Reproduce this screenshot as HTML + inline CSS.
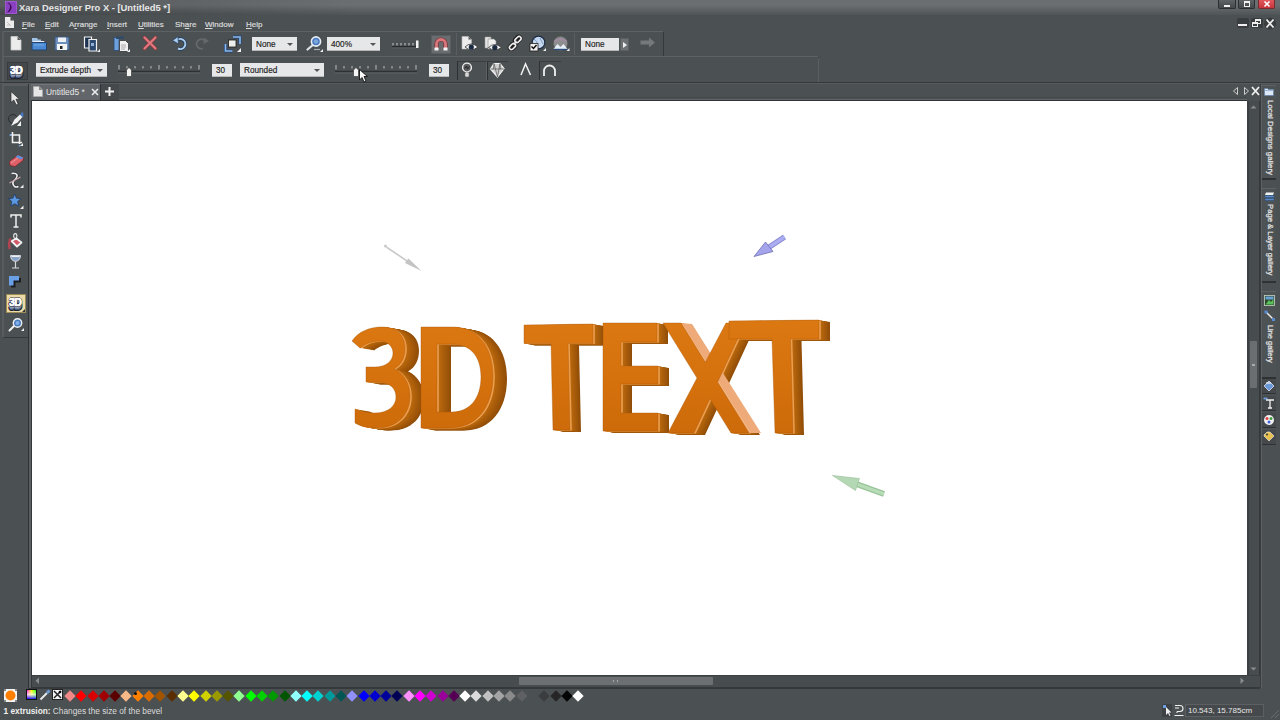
<!DOCTYPE html>
<html><head><meta charset="utf-8">
<style>
*{margin:0;padding:0;box-sizing:border-box}
html,body{width:1280px;height:720px;overflow:hidden;background:#4b5052;font-family:"Liberation Sans",sans-serif;color:#ddd;position:relative}
.a{position:absolute}
svg{position:absolute;overflow:visible}
#title{left:0;top:0;width:1280px;height:15px;background:linear-gradient(90deg,rgba(20,22,24,0.22),rgba(20,22,24,0.12) 15%,rgba(20,22,24,0) 28%),linear-gradient(#6a6e71,#6b6f72 35%,#5d6164 65%,#4f5456 100%)}
#title .t{left:19px;top:2px;font:bold 9.4px "Liberation Sans",sans-serif;color:#e6e6e6;white-space:nowrap}
.mi{position:absolute;top:20px;font-size:8px;color:#dadada;white-space:nowrap;-webkit-text-stroke:0.2px #dadada}
.mi u{text-decoration:underline;text-underline-offset:1px;text-decoration-thickness:1px}
#tb1{left:2px;top:31px;width:662px;height:26px;background:#4b5052;border-top:1px solid #5e6265;border-left:2px solid #585c5f;border-right:1px solid #36393c}
#tb2{left:2px;top:56px;width:817px;height:26px;background:#4b5052;border-top:1px solid #5e6265;border-left:2px solid #585c5f;border-right:1px solid #36393c}
#canvas{left:32px;top:101px;width:1215px;height:574px;background:#fff}
#lefttb{left:2px;top:84px;width:26px;height:254px;background:#4b5052;border-left:2px solid #585c5f;border-top:2px solid #585c5f;border-bottom:1px solid #36393c}
#vscroll{left:1247px;top:101px;width:13px;height:587px;background:#474c4e;border-left:2px solid #3d4043;border-right:1px solid #36393c}
#hscroll{left:32px;top:675px;width:1228px;height:13px;background:#474c4e;border-top:1px solid #3d4043;border-bottom:1px solid #36393c}
.sw{position:absolute;width:8px;height:8px;transform:rotate(45deg)}
.dd{position:absolute;background:#e6e7e8;color:#1c1c1c;font-size:8.2px;height:14px;line-height:15px;padding-left:4px;-webkit-text-stroke:0.15px #1c1c1c;white-space:nowrap;border-bottom:1px solid #b8b8b8}
.dd i{position:absolute;right:4px;top:6px;border-left:3.5px solid transparent;border-right:3.5px solid transparent;border-top:3px solid #555}
.sep{position:absolute;width:1px;background:#36393c;border-right:1px solid #5a5e61}
.gt{position:absolute;left:1262px;width:14px;background:#4d5254;border-top:1px solid #5e6265;border-bottom:2px solid #2f3235}
.gtx{position:absolute;left:0;top:0;transform-origin:0 0;transform:rotate(90deg);font-size:8px;color:#e4e4e4;white-space:nowrap;-webkit-text-stroke:0.25px #e4e4e4}
</style></head><body>
<!-- title bar -->
<div id="title" class="a">
  <svg width="12" height="13" style="left:4.5px;top:1px"><rect width="12" height="13" fill="#8a40c0"/><rect x="0.5" y="0.5" width="11" height="12" fill="none" stroke="#a060d0" stroke-width="0.8"/><path d="M2.5 2Q5.5 3 5 6.5Q4.5 9.5 2 11.5Q5.5 11 6.5 7Q7 3.5 3 1.5Z" fill="#3a0a50"/></svg>
  <div class="t a">Xara Designer Pro X - [Untitled5 *]</div>
  <div class="a" style="left:1218px;top:0;width:18px;height:9px;background:linear-gradient(#606366,#45484b);border:1px solid #2c2e31;border-top:none;border-radius:0 0 2px 2px"><div class="a" style="left:5px;top:5px;width:6px;height:2px;background:#f0f0f0"></div></div>
  <div class="a" style="left:1238px;top:0;width:17px;height:9px;background:linear-gradient(#606366,#45484b);border:1px solid #2c2e31;border-top:none;border-radius:0 0 2px 2px"><div class="a" style="left:5px;top:1px;width:6px;height:6px;border:1px solid #f0f0f0;border-top-width:2px"></div></div>
  <div class="a" style="left:1258px;top:0;width:17px;height:9px;background:linear-gradient(#e0585e,#c8353c);border:1px solid #7a2a2e;border-top:none;border-radius:0 0 2px 2px">
    <svg width="17" height="9" style="left:0;top:0"><path d="M5.5 1.5L10.5 6.5M10.5 1.5L5.5 6.5" stroke="#fff" stroke-width="1.6"/></svg></div>
</div>
<!-- menu -->
<svg width="9" height="12" style="left:5px;top:17px"><path d="M0 0H5.5L9 3.5V11H0Z" fill="#ececec"/><path d="M5.5 0V3.5H9Z" fill="#444"/><path d="M2 5L6 9M2 8H5" stroke="#aaa" stroke-width="0.6"/></svg>
<div class="mi" style="left:22px"><u>F</u>ile</div>
<div class="mi" style="left:45px"><u>E</u>dit</div>
<div class="mi" style="left:69px">A<u>r</u>range</div>
<div class="mi" style="left:107px"><u>I</u>nsert</div>
<div class="mi" style="left:138px"><u>U</u>tilities</div>
<div class="mi" style="left:175px">Sh<u>a</u>re</div>
<div class="mi" style="left:205px"><u>W</u>indow</div>
<div class="mi" style="left:246px"><u>H</u>elp</div>
<!-- mdi buttons -->
<div class="a" style="left:1237px;top:18px;width:12px;height:10px;background:#3a3d40;border-radius:2px"><div class="a" style="left:1px;top:6px;width:9px;height:2px;background:#eee"></div></div>
<div class="a" style="left:1251px;top:18px;width:12px;height:10px;background:#3a3d40;border-radius:2px"><div class="a" style="left:4px;top:1px;width:6px;height:5px;border:1px solid #eee;border-top-width:2px"></div><div class="a" style="left:1px;top:4px;width:6px;height:5px;border:1px solid #eee;border-top-width:2px;background:#3a3d40"></div></div>
<svg width="14" height="11" style="left:1264px;top:18px"><circle cx="6" cy="5.5" r="6" fill="#3a3d40"/><path d="M2.5 1.5L9.5 9.5M9.5 1.5L2.5 9.5" stroke="#eee" stroke-width="1.8"/></svg>

<div id="tb1" class="a"></div>
<div class="a" style="left:0;top:82px;width:1280px;height:1px;background:#35383b"></div>
<div class="a" style="left:0;top:83px;width:1280px;height:1px;background:#575b5e"></div>
<div class="a" style="left:29px;top:97px;width:1218px;height:1px;background:#46494c"></div>
<div class="a" style="left:29px;top:99px;width:1218px;height:1px;background:#62666a"></div>
<div id="tb2" class="a"></div>
<div class="sep" style="left:456px;top:33px;height:22px"></div>
<div class="sep" style="left:574px;top:33px;height:22px"></div>
<div class="sep" style="left:818px;top:58px;height:24px"></div>

<!-- toolbar1 icons -->
<svg width="12" height="15" style="left:10px;top:36px"><path d="M1 0.5H7.5L11 4V14H1Z" fill="#ececec" stroke="#c8c8c8" stroke-width="0.8"/><path d="M7.5 0.5V4H11Z" fill="#5a5a5a"/></svg>
<svg width="17" height="14" style="left:31px;top:37px"><path d="M1 1H6L7 2.5H10V5H1Z" fill="#9ec3e6"/><path d="M2 4H13L14 6H2Z" fill="#e8eef4"/><path d="M1 5.5H15.5V13H1Z" fill="#4a8ad4" stroke="#22456e" stroke-width="1"/><path d="M3 8H13" stroke="#77aee6" stroke-width="1"/></svg>
<svg width="16" height="15" style="left:54px;top:36px"><rect x="1" y="1" width="14" height="13" fill="#6d8fbd" stroke="#3c5478" stroke-width="1"/><rect x="4" y="1.5" width="8" height="4.5" fill="#eef2f6"/><rect x="3" y="8" width="10" height="6" fill="#f4f4f4"/><rect x="6" y="10" width="2.5" height="3" fill="#222"/></svg>
<svg width="18" height="17" style="left:83px;top:36px"><path d="M1.5 1H8.5V12H1.5Z" fill="#1e3350" stroke="#f0f0f0" stroke-width="1.2"/><path d="M6 3.5H13.5V15H6Z" fill="#2c4a70" stroke="#f0f0f0" stroke-width="1.2"/><rect x="8" y="7" width="3" height="3" fill="#8fb0d4"/><path d="M14 16L17 13V16Z" fill="#f0f0f0"/></svg>
<svg width="18" height="17" style="left:113px;top:36px"><rect x="1" y="1.5" width="5" height="13" fill="#6fa0dc" stroke="#2a4a75" stroke-width="0.8"/><rect x="3" y="0.5" width="8" height="2.5" fill="#304a6a"/><path d="M6.5 4.5H12.5L15.5 7.5V15.5H6.5Z" fill="#f0f0f0" stroke="#333" stroke-width="0.8"/><path d="M8 9H13M8 11H13M8 13H12" stroke="#999" stroke-width="0.8"/><path d="M14 16L17 13V16Z" fill="#f0f0f0"/></svg>
<svg width="16" height="16" style="left:142px;top:35px"><path d="M2.5 2.5L13.5 13.5M13.5 2.5L2.5 13.5" stroke="#9a3c40" stroke-width="3.2" stroke-linecap="round"/><path d="M2.5 2.5L13.5 13.5M13.5 2.5L2.5 13.5" stroke="#e07a80" stroke-width="2" stroke-linecap="round"/></svg>
<svg width="16" height="14" style="left:172px;top:36px"><path d="M4 5.5A5 5 0 1 1 6 12.5" fill="none" stroke="#1e3a60" stroke-width="3.4"/><path d="M4 5.5A5 5 0 1 1 6 12.5" fill="none" stroke="#a9cbec" stroke-width="2"/><path d="M0.5 4.5L6 0.5L6.5 8Z" fill="#a9cbec" stroke="#1e3a60" stroke-width="0.7"/></svg>
<svg width="14" height="13" style="left:196px;top:37px"><path d="M9.5 4.5A4.8 4.8 0 1 0 7 11.5" fill="none" stroke="#66696c" stroke-width="1.8"/><path d="M13 4L8 0.5L7.5 7Z" fill="#66696c"/></svg>
<svg width="18" height="17" style="left:224px;top:36px"><path d="M9 1H16V8" fill="none" stroke="#24467a" stroke-width="3"/><path d="M9 1H16V8" fill="none" stroke="#8ab8ea" stroke-width="1.6"/><path d="M1.5 8V15H8.5" fill="none" stroke="#24467a" stroke-width="3"/><path d="M1.5 8V15H8.5" fill="none" stroke="#8ab8ea" stroke-width="1.6"/><rect x="4.5" y="4" width="7.5" height="7" fill="#eeeeea" stroke="#1c1c1c" stroke-width="0.8"/><path d="M13 16L17 12V16Z" fill="#f0f0f0"/></svg>
<div class="dd" style="left:252px;top:37px;width:45px">None<i></i></div>
<svg width="18" height="17" style="left:305px;top:36px"><path d="M9 8L2.5 13.5" stroke="#dfe6ee" stroke-width="2.2" stroke-linecap="round"/><circle cx="11" cy="5.5" r="4.6" fill="#4a7ac0" stroke="#e8eef4" stroke-width="1.6"/><circle cx="11" cy="5.5" r="2.2" fill="#7aa6dc"/><path d="M9 13.5H15" stroke="#aab" stroke-width="1.2"/><path d="M15 16L18 13V16Z" fill="#f0f0f0"/></svg>
<div class="dd" style="left:327px;top:37px;width:53px">400%<i></i></div>
<svg width="30" height="9" style="left:391px;top:40px"><path d="M1 6.5H26" stroke="#2a2d30" stroke-width="1.5"/><path d="M1 8H26" stroke="#606366" stroke-width="0.8"/><g stroke="#c8c8c8" stroke-width="1"><path d="M2 3V5.5M6 3V5.5M10 3V5.5M14 3V5.5M18 3V5.5M22 3V5.5"/></g><rect x="25" y="0.5" width="2.5" height="7.5" fill="#f4f4f4"/></svg>
<div class="a" style="left:431px;top:35px;width:20px;height:19px;background:#6a6d70;border:1px solid #5a5d60"></div>
<svg width="16" height="15" style="left:433px;top:37px"><path d="M3.5 11V7A4.5 4.5 0 0 1 12.5 7V11" fill="none" stroke="#7a2e34" stroke-width="4.2"/><path d="M3.5 11V7A4.5 4.5 0 0 1 12.5 7V11" fill="none" stroke="#d8777c" stroke-width="2.8"/><rect x="1.5" y="10.5" width="4" height="3" fill="#f4f4f4"/><rect x="10.5" y="10.5" width="4" height="3" fill="#f4f4f4"/></svg>
<svg width="18" height="16" style="left:461px;top:36px"><path d="M1 0.5H7.5L10.5 3.5V13H1Z" fill="#ececec" stroke="#bbb" stroke-width="0.6"/><path d="M7.5 0.5V3.5H10.5Z" fill="#555"/><path d="M4 11Q10 5 17 11Q10 16.5 4 11Z" fill="#f2f2f2" stroke="#333" stroke-width="0.8"/><circle cx="10.3" cy="11" r="2.6" fill="#1a2a40"/></svg>
<svg width="18" height="16" style="left:484px;top:36px"><path d="M1 1H7V12H1Z" fill="#e6e6e6" stroke="#999" stroke-width="0.6"/><path d="M4 3H10L12 5V13H4Z" fill="#eeeeee" stroke="#888" stroke-width="0.6"/><path d="M4.5 11.5Q10.5 5.5 17.5 11.5Q10.5 16.5 4.5 11.5Z" fill="#f2f2f2" stroke="#333" stroke-width="0.8"/><circle cx="10.8" cy="11.5" r="2.6" fill="#1a2a40"/></svg>
<svg width="15" height="14" style="left:508px;top:36px"><g fill="none" stroke="#1e1e1e" stroke-width="3.4"><path d="M2 11.5L5.5 8M9.5 5L12.5 2"/><rect x="6" y="1.5" width="7" height="4" rx="2" transform="rotate(-45 9.5 3.5)"/><rect x="1" y="8.5" width="7" height="4" rx="2" transform="rotate(-45 4.5 10.5)"/></g><g fill="none" stroke="#f0f0f0" stroke-width="1.6"><rect x="6.5" y="1.5" width="7" height="4" rx="2" transform="rotate(-45 10 3.5)"/><rect x="1" y="8.5" width="7" height="4" rx="2" transform="rotate(-45 4.5 10.5)"/><path d="M5.5 8.5L8.5 5.5"/></g></svg>
<svg width="18" height="17" style="left:529px;top:35px"><circle cx="9.5" cy="7.5" r="6.3" fill="#c6d8f0" stroke="#1e2e48" stroke-width="1.2"/><path d="M5 4Q9 6 8 10M11 3Q13 7 14 9" stroke="#7a9cc8" stroke-width="1" fill="none"/><rect x="1" y="8.5" width="8" height="7.5" fill="#f2f2f2" stroke="#222" stroke-width="0.8"/><path d="M2.5 11.5L4.5 13.5L7.5 10" stroke="#111" stroke-width="1.5" fill="none"/><path d="M14 16L17 13V16Z" fill="#f0f0f0"/></svg>
<svg width="18" height="17" style="left:552px;top:35px"><circle cx="8.5" cy="8.5" r="7" fill="#8e8e8e" stroke="#5e6062" stroke-width="0.6"/><path d="M2.5 6Q8.5 3 14.5 6" stroke="#a68aa8" stroke-width="1.6" fill="none"/><path d="M1.5 14L5.5 9L8.5 12L11.5 9L15.5 14Z" fill="#e6eef8"/><path d="M2 14.5H15" stroke="#2a4a78" stroke-width="1.4"/><path d="M14.5 16L17.5 13V16Z" fill="#f0f0f0"/></svg>
<div class="dd" style="left:581px;top:38px;width:38px;height:13px;line-height:14px">None</div>
<div class="a" style="left:620px;top:38px;width:9px;height:13px;background:#6e7174;border:1px solid #5c5f62"></div>
<svg width="5" height="6" style="left:623px;top:41.5px"><path d="M0 0L4 3L0 6Z" fill="#f0f0f0"/></svg>
<svg width="16" height="11" style="left:640px;top:37px"><path d="M0.5 3.5H9V0.5L15 5.5L9 10.5V7.5H0.5Z" fill="#76797c"/></svg>

<!-- toolbar2 -->
<div class="a" style="left:7px;top:62px;width:21px;height:18px;background:#45484b;border:1px solid #393c3f"></div>
<svg width="18" height="15" style="left:8.5px;top:63.5px"><g font-family="Liberation Sans" font-weight="bold" font-size="10.5" letter-spacing="-0.7" stroke-linejoin="round"><text x="1" y="13.5" fill="#48587a" stroke="#1a2030" stroke-width="2" paint-order="stroke">3D</text><text x="1" y="12.5" fill="#7888a6">3D</text><text x="1" y="11.5" fill="#9aa6bc">3D</text><text x="1" y="9.5" fill="#f8f8f8" stroke="#1a2030" stroke-width="1.6" paint-order="stroke">3D</text><text x="1" y="9.5" fill="#ffffff" stroke="#ffffff" stroke-width="0.5">3D</text></g></svg>
<div class="dd" style="left:36px;top:63px;width:71px">Extrude depth<i></i></div>
<svg width="84" height="14" style="left:117px;top:63px"><path d="M1 8.5H83" stroke="#2e3134" stroke-width="1.5"/><path d="M1 10H83" stroke="#5e6265" stroke-width="1"/><g stroke="#bcbcbc" stroke-width="1"><path d="M2 2V6.5M10 3V5.5M18 3V5.5M26 3V5.5M34 3V5.5M42 2V6.5M50 3V5.5M58 3V5.5M66 3V5.5M74 3V5.5M82 2V6.5"/></g></svg>
<svg width="7" height="10" style="left:125.5px;top:67px"><path d="M0.5 3L3 0.5L5.5 3V9.5H0.5Z" fill="#f4f4f4" stroke="#2a2a2a" stroke-width="0.6"/></svg>
<div class="dd" style="left:212px;top:64px;width:20px;height:13px;line-height:13px">30</div>
<div class="dd" style="left:240px;top:63px;width:84px">Rounded<i></i></div>
<svg width="84" height="14" style="left:334px;top:63px"><path d="M1 8.5H83" stroke="#2e3134" stroke-width="1.5"/><path d="M1 10H83" stroke="#5e6265" stroke-width="1"/><g stroke="#bcbcbc" stroke-width="1"><path d="M2 2V6.5M10 3V5.5M18 3V5.5M26 3V5.5M34 3V5.5M42 2V6.5M50 3V5.5M58 3V5.5M66 3V5.5M74 3V5.5M82 2V6.5"/></g></svg>
<svg width="7" height="10" style="left:352.5px;top:67px"><path d="M0.5 3L3 0.5L5.5 3V9.5H0.5Z" fill="#f4f4f4" stroke="#2a2a2a" stroke-width="0.6"/></svg>
<div class="dd" style="left:429px;top:64px;width:20px;height:13px;line-height:13px">30</div>
<div class="a" style="left:457px;top:61px;width:30px;height:19px;border-left:1px solid #2e3134;border-top:1px solid #3a3d40;border-right:1px solid #5c6063"></div>
<svg width="12" height="17" style="left:461px;top:62px"><circle cx="6" cy="5.5" r="4.4" fill="#5a5d60" stroke="#f0f0f0" stroke-width="1.4"/><path d="M3.5 6.5L5.5 4L6.5 7L8.5 4.5" stroke="#222" stroke-width="1" fill="none"/><rect x="4" y="10" width="4" height="5" rx="1.5" fill="#d8d8d8" stroke="#666" stroke-width="0.5"/></svg>
<div class="a" style="left:487px;top:61px;width:21px;height:19px;border-left:1px solid #2e3134;border-top:1px solid #3a3d40"></div>
<svg width="16" height="16" style="left:489px;top:62px"><path d="M5 1.5H11L15 6.5L8.5 15L1.5 7Z" fill="#cfcfcf" stroke="#f4f4f4" stroke-width="1.2"/><path d="M1.5 7H15M5 1.5L8.5 15M11 1.5L8.5 15M5 1.5L4.5 7M11 1.5L11.5 7" stroke="#555" stroke-width="0.7"/></svg>
<svg width="12" height="13" style="left:520px;top:63px"><path d="M1 12L5.5 1L10.5 12" fill="none" stroke="#f0f0f0" stroke-width="1.5"/></svg>
<div class="a" style="left:539px;top:61px;width:22px;height:19px;border-left:1px solid #2e3134;border-top:1px solid #3a3d40"></div>
<svg width="15" height="13" style="left:541.5px;top:64px"><path d="M2 12V7A5.5 5.5 0 0 1 13 7V12" fill="none" stroke="#f0f0f0" stroke-width="1.8"/></svg>
<!-- cursor -->
<svg width="10" height="14" style="left:359px;top:69px"><path d="M0.5 0.5V11L3 8.5L5 13L7 12L5 7.5H8.5Z" fill="#fafafa" stroke="#111" stroke-width="0.9"/></svg>


<!-- tab bar -->
<div class="a" style="left:29px;top:84px;width:71px;height:16px;background:#62666a;border-top:1px solid #70757a"></div>
<svg width="10" height="11" style="left:33px;top:86px"><path d="M0.5 0.5H6L9.5 4V10.5H0.5Z" fill="#e6e6e6" stroke="#aaa"/><path d="M6 0.5V4H9.5" fill="#888"/></svg>
<div class="a" style="left:46px;top:87px;font-size:8.4px;color:#e8e8e8;white-space:nowrap">Untitled5 *</div>
<svg width="8" height="8" style="left:91px;top:88px"><path d="M1 1L7 7M7 1L1 7" stroke="#eee" stroke-width="1.5"/></svg>
<div class="a" style="left:100px;top:84px;width:19px;height:16px;background:#45494c;border-left:1px solid #2e3134"></div>
<svg width="9" height="9" style="left:105px;top:87px"><path d="M4.5 0V9M0 4.5H9" stroke="#f2f2f2" stroke-width="2"/></svg>
<div class="a" style="left:31px;top:100px;width:1216px;height:1px;background:#2e3134"></div>
<svg width="30" height="10" style="left:1232px;top:86px"><path d="M5.5 1.5L1.5 5L5.5 8.5Z" fill="none" stroke="#ccc"/><path d="M12.5 1.5L16.5 5L12.5 8.5Z" fill="none" stroke="#ccc"/><path d="M20 1L27 9M27 1L20 9" stroke="#f0f0f0" stroke-width="1.8"/></svg>

<!-- left toolbar -->
<div id="lefttb" class="a"></div>
<div class="a" style="left:28px;top:84px;width:1px;height:604px;background:#303336"></div>
<div class="a" style="left:29px;top:84px;width:2px;height:604px;background:#5a5e61"></div>
<div class="a" style="left:31px;top:100px;width:1px;height:588px;background:#35383b"></div>

<!-- left toolbar icons -->
<svg width="10" height="15" style="left:10px;top:91px"><path d="M1 0.5V11.5L3.8 9L6.2 14L8.2 13L6 8.2H9.5Z" fill="#e8e8e8" stroke="#2a2a2a" stroke-width="0.7"/></svg>
<svg width="16" height="16" style="left:8px;top:111px"><circle cx="5" cy="8" r="4.5" fill="none" stroke="#2c2f32" stroke-width="1"/><path d="M3 15L6.5 8.5L12 3.5L14.5 6L9.5 11.5Z" fill="#f2f2f2"/><path d="M12 3.5L15 0.5L15.5 6L14.5 6Z" fill="#4a7ac0"/><path d="M13 10V15H9Z" fill="#f2f2f2"/></svg>
<svg width="15" height="16" style="left:9px;top:131px"><path d="M3.5 1V11.5H13" fill="none" stroke="#f0f0f0" stroke-width="1.6"/><path d="M1 4H10.5V13" fill="none" stroke="#f0f0f0" stroke-width="1.6"/><path d="M0.5 4H2.5M10.5 14V15.5" stroke="#6fa0dc" stroke-width="1.5"/><path d="M11 15L14 12V15Z" fill="#f0f0f0"/></svg>
<svg width="17" height="16" style="left:8px;top:152px"><path d="M1.5 9.5L10 3L15.5 5.5L15 8.5L7 14.5L2 13.5Z" fill="#e06068" stroke="#7a2a30" stroke-width="0.8"/><path d="M7.5 5L10 3L15.5 5.5L13 7.5Z" fill="#5a90d8"/><path d="M3 11L10 6" stroke="#f09aa0" stroke-width="1"/></svg>
<svg width="16" height="17" style="left:8px;top:171px"><path d="M3.5 2.5Q7.5 1.5 9 4Q9.5 6.5 6 9.5Q3.5 12.5 6.5 15.5Q8.5 16.5 10.5 15.5" fill="none" stroke="#1a1c1e" stroke-width="2.8" opacity="0.6"/><path d="M3.5 2.5Q7.5 1.5 9 4Q9.5 6.5 6 9.5Q3.5 12.5 6.5 15.5Q8.5 16.5 10.5 15.5" fill="none" stroke="#f0f0f0" stroke-width="1.6"/><path d="M1.5 12L12.5 6" stroke="#c8a8ae" stroke-width="1.3"/><path d="M12 17L15.5 13.5V17Z" fill="#f0f0f0"/></svg>
<svg width="17" height="17" style="left:8px;top:193px"><path d="M6.7 1L8.5 5.2L13 5.6L9.6 8.6L10.6 13L6.7 10.7L2.8 13L3.8 8.6L0.4 5.6L4.9 5.2Z" fill="#5c98e0" stroke="#1e3c68" stroke-width="0.8"/><path d="M12 16L15.5 12.5V16Z" fill="#f0f0f0"/></svg>
<svg width="12" height="14" style="left:9.5px;top:214px"><path d="M1 3.5V1H11V3.5M6 1V13M3.5 13H8.5" fill="none" stroke="#f0f0f0" stroke-width="1.5"/></svg>
<svg width="16" height="17" style="left:7px;top:233px"><ellipse cx="8.3" cy="3" rx="1.6" ry="2.4" fill="none" stroke="#e8e8e8" stroke-width="1.1"/><path d="M4.5 8L9.5 5.5L14.5 9.5L10 13.5Z" fill="#d05a68" stroke="#f2f2f2" stroke-width="1.8" stroke-linejoin="round"/><path d="M3 6.5Q1.5 11 2.5 15" stroke="#b04450" stroke-width="2.6" stroke-linecap="round" fill="none"/></svg>
<svg width="11" height="14" style="left:10px;top:255px"><path d="M0.5 0.5H10.5Q10.5 5.5 5.5 6.5Q0.5 5.5 0.5 0.5Z" fill="#8aa4c8" stroke="#e0e4ea" stroke-width="0.9"/><path d="M1.5 1.5H9.5" stroke="#f0f0f0" stroke-width="1"/><path d="M5.5 6.5V12.5M2 13H9" stroke="#d8d8d8" stroke-width="1.2"/></svg>
<svg width="14" height="13" style="left:8px;top:275px"><path d="M3 3H13V7.5H7.5V12.5H3Z" fill="#1c1e22"/><path d="M1 1H11V5.5H5.5V10.5H1Z" fill="#6aa0e8"/></svg>
<div class="a" style="left:6px;top:294px;width:20px;height:19px;background:#eadba6;border:1px solid #9c8c58"></div>
<svg width="18" height="16" style="left:7.5px;top:295.5px"><g font-family="Liberation Sans" font-weight="bold" font-size="10.5" letter-spacing="-0.7" stroke-linejoin="round"><text x="1" y="13.5" fill="#48587a" stroke="#1a2030" stroke-width="2" paint-order="stroke">3D</text><text x="1" y="12.5" fill="#7888a6">3D</text><text x="1" y="11.5" fill="#9aa6bc">3D</text><text x="1" y="9.5" fill="#f8f8f8" stroke="#1a2030" stroke-width="1.6" paint-order="stroke">3D</text><text x="1" y="9.5" fill="#ffffff" stroke="#ffffff" stroke-width="0.5">3D</text></g><path d="M14 16L17 13V16Z" fill="#333"/></svg>
<svg width="17" height="14" style="left:8px;top:318px"><path d="M6 8L1.5 12.5" stroke="#f0f0f0" stroke-width="2" stroke-linecap="round"/><circle cx="9.5" cy="5" r="4.2" fill="#4a7ac0" stroke="#f0f0f0" stroke-width="1.4"/><circle cx="9.5" cy="5" r="2" fill="#7fb0e6"/><path d="M13 13L16 10V13Z" fill="#f0f0f0"/></svg>


<!-- canvas -->
<div id="canvas" class="a"></div>

<svg width="1280" height="720" style="left:0;top:0">
<defs>
<linearGradient id="og" x1="0" y1="320" x2="0" y2="436" gradientUnits="userSpaceOnUse">
<stop offset="0" stop-color="#dc7812"/><stop offset="0.5" stop-color="#d6720d"/><stop offset="1" stop-color="#cc6a0a"/></linearGradient>
<g id="letters"><g id="la">
<path d="M352 341C358 332 369 327 382 327C397 327 405 336 405 348C405 358 401 365 394 369C404 373 410 384 410 396C410 415 397 428 377 428C367 428 360 426 355 423L355 409C361 412 368 413 375 413C388 413 396 406 396 397C396 387 388 382 377 382L366 382L366 367L375 367C386 367 393 361 393 353C393 346 387 341 380 341C372 341 365 344 360 348Z"/>
<path fill-rule="evenodd" d="M421 327H452C478 327 493 347 493 376C493 408 476 428 450 428H421ZM437 344H452C471 344 481 357 481 377C481 398 470 412 452 412H437Z"/>
</g><g id="lb">
<path d="M524 325L593 324V343.5H568L570 430H553L551 343.5H524Z"/>
<path d="M603 323H657V342H621V366H658V384H621V413H658V431H603Z"/>
<path d="M663 323H681L705.3 362.3L726 323H745L717.6 382.2L749 433H731L709.9 398.8L694 433H668L697 378Z"/>
<path d="M729 321L819 320V339H790.5L793 433H775L772 339H729Z"/>
</g></g>
</defs>
<use href="#la" x="14.0" y="2.50" fill="rgb(146,78,8)"/>
<use href="#la" x="13.0" y="2.32" fill="rgb(149,80,8)"/>
<use href="#la" x="12.0" y="2.14" fill="rgb(153,82,8)"/>
<use href="#la" x="11.0" y="1.96" fill="rgb(156,84,9)"/>
<use href="#la" x="10.0" y="1.79" fill="rgb(160,87,9)"/>
<use href="#la" x="9.0" y="1.61" fill="rgb(163,89,10)"/>
<use href="#la" x="8.0" y="1.43" fill="rgb(167,91,10)"/>
<use href="#la" x="7.0" y="1.25" fill="rgb(170,94,11)"/>
<use href="#la" x="6.0" y="1.07" fill="rgb(174,96,11)"/>
<use href="#la" x="5.0" y="0.89" fill="rgb(177,98,12)"/>
<use href="#la" x="4.0" y="0.71" fill="rgb(181,101,12)"/>
<use href="#la" x="3.0" y="0.54" fill="rgb(184,103,13)"/>
<use href="#la" x="2.0" y="0.36" fill="rgb(188,105,13)"/>
<use href="#la" x="1.0" y="0.18" fill="rgb(192,108,14)"/>
<use href="#lb" x="11.0" y="2.00" fill="rgb(146,78,8)"/>
<use href="#lb" x="10.0" y="1.82" fill="rgb(150,81,8)"/>
<use href="#lb" x="9.0" y="1.64" fill="rgb(155,84,9)"/>
<use href="#lb" x="8.0" y="1.45" fill="rgb(159,87,9)"/>
<use href="#lb" x="7.0" y="1.27" fill="rgb(164,90,10)"/>
<use href="#lb" x="6.0" y="1.09" fill="rgb(169,93,11)"/>
<use href="#lb" x="5.0" y="0.91" fill="rgb(173,96,11)"/>
<use href="#lb" x="4.0" y="0.73" fill="rgb(178,99,12)"/>
<use href="#lb" x="3.0" y="0.55" fill="rgb(182,102,12)"/>
<use href="#lb" x="2.0" y="0.36" fill="rgb(187,105,13)"/>
<use href="#lb" x="1.0" y="0.18" fill="rgb(192,108,14)"/>
<use href="#letters" x="1.8" y="0.4" fill="#eea050"/>
<path d="M681 323L692 324L761 433L749 433Z" fill="#eeaa78"/><path d="M682 324L750 432" stroke="#f6b880" stroke-width="1"/>
<use href="#letters" fill="url(#og)" stroke="#a85808" stroke-width="0.7" stroke-opacity="0.55"/>
<!-- arrows -->
<defs><filter id="bl" x="-20%" y="-20%" width="140%" height="140%"><feGaussianBlur stdDeviation="0.45"/></filter></defs>
<g filter="url(#bl)">
<path d="M387 247.5L410 263" stroke="#cacaca" stroke-width="1.6" stroke-linecap="round"/>
<circle cx="385.5" cy="246" r="1.5" fill="#c8c8c8"/>
<path d="M421.5 271L405 263L408.5 258.5Z" fill="#c4c4c4"/>
<path d="M784.5 237L767 248.5" stroke="#8a8ad0" stroke-width="5.6" stroke-linecap="butt"/>
<path d="M784.5 237L767 248.5" stroke="#acacf2" stroke-width="3.4" stroke-linecap="butt"/>
<path d="M765.5 242L773 251.5L754 256.5Z" fill="#a4a4ec" stroke="#7070b0" stroke-width="0.8" stroke-linejoin="round"/>
<path d="M884 494L855 483.5" stroke="#98c498" stroke-width="5.6"/>
<path d="M884 494L855 483.5" stroke="#b8dcb8" stroke-width="3.4"/>
<path d="M832.5 475.5L859.5 478.5L855.5 490.5Z" fill="#b4d8b4" stroke="#98bc98" stroke-width="0.6" stroke-linejoin="round"/>
</g>
</svg>

<div id="vscroll" class="a"></div>
<div id="hscroll" class="a"></div>


<!-- right gallery -->
<div class="a" style="left:1260px;top:84px;width:1px;height:604px;background:#3a3d40"></div>
<div class="a" style="left:1261px;top:84px;width:1px;height:604px;background:#5c6063"></div>
<div class="gt" style="top:85px;height:95px"></div>
<svg width="10" height="8" style="left:1264px;top:88px"><path d="M0.5 0.5H3.5L4.5 1.5H9.5V7.5H0.5Z" fill="#dce8f6" stroke="#5a7ca8" stroke-width="0.6"/><path d="M0.5 2.5H9.5" stroke="#8aa8cc" stroke-width="0.8"/></svg>
<div class="gtx" style="left:1274.5px;top:100px;font-size:7.9px">Local Designs gallery</div>
<div class="gt" style="top:188px;height:95px"></div>
<svg width="11" height="10" style="left:1264px;top:192px"><path d="M2 0.5H10L9 3H1Z" fill="#f2f2f2"/><path d="M1 3.5H10V5.5H1ZM1 6.5H10V8.5H1Z" fill="#5a8ac4" stroke="#2c4c78" stroke-width="0.5"/></svg>
<div class="gtx" style="left:1274.5px;top:204px;font-size:7.7px">Page &amp; Layer gallery</div>
<div class="gt" style="top:291px;height:88px"></div>
<svg width="11" height="11" style="left:1264px;top:295px"><rect x="0.5" y="0.5" width="10" height="10" fill="#2a4a2a" stroke="#c8d8c8" stroke-width="0.8"/><path d="M1.5 9.5L5 5L7 7L9.5 4V9.5Z" fill="#5ac05a"/><rect x="1.5" y="1.5" width="8" height="3" fill="#6aa0d8"/></svg>
<svg width="12" height="12" style="left:1264px;top:310px"><path d="M2 2L9.5 9.5" stroke="#f0f0f0" stroke-width="1.4"/><rect x="0.5" y="0.5" width="3" height="3" fill="#5a8ad0"/><rect x="8" y="8" width="3" height="3" fill="#5a8ad0"/></svg>
<div class="gtx" style="left:1274.5px;top:325px;font-size:7.4px">Line gallery</div>
<div class="a" style="left:1262px;top:379px;width:14px;height:15px;background:#45494c;border-bottom:1px solid #2f3235"></div>
<svg width="12" height="12" style="left:1263px;top:380px"><path d="M1 6L6 1L11 6L6 11Z" fill="#6a9ad8" stroke="#dde" stroke-width="0.8"/><path d="M3 3H8" stroke="#f0f0f0" stroke-width="1.2"/></svg>
<div class="a" style="left:1262px;top:396px;width:14px;height:15px;background:#45494c;border-bottom:1px solid #2f3235"></div>
<svg width="12" height="12" style="left:1263px;top:397px"><rect x="0.5" y="0.5" width="4" height="2" fill="#6a9ad8"/><path d="M3 3H11M7 3V11M5 11H9" stroke="#f0f0f0" stroke-width="1.3" fill="none"/></svg>
<div class="a" style="left:1262px;top:413px;width:14px;height:15px;background:#45494c;border-bottom:1px solid #2f3235"></div>
<svg width="12" height="12" style="left:1263px;top:414px"><circle cx="6" cy="6" r="5" fill="#f0f0f0"/><circle cx="4" cy="4.5" r="1.5" fill="#e04040"/><circle cx="8" cy="4.5" r="1.5" fill="#40a040"/><circle cx="6" cy="8" r="1.5" fill="#4060e0"/></svg>
<div class="a" style="left:1262px;top:430px;width:14px;height:15px;background:#45494c;border-bottom:1px solid #2f3235"></div>
<svg width="12" height="12" style="left:1263px;top:431px"><path d="M1 4L4 1H7L11 5L6 10L1 5Z" fill="#e8c050" stroke="#f0f0f0" stroke-width="0.6"/><circle cx="4" cy="3.5" r="1" fill="#333"/></svg>
<!-- scrollbar details -->
<svg width="8" height="4" style="left:1249.5px;top:105px"><path d="M0.5 3.5L3.5 0.5L6.5 3.5Z" fill="#8a8d90"/></svg>
<div class="a" style="left:1250px;top:341px;width:7px;height:47px;background:#6a6e71;border-radius:1px"></div>
<div class="a" style="left:1252px;top:364px;width:3px;height:2px;border-top:1px solid #aaa;border-bottom:1px solid #aaa"></div>
<svg width="8" height="5" style="left:1249.5px;top:667px"><path d="M0.5 0.5L3.5 3.5L6.5 0.5Z" fill="#8a8d90"/></svg>
<div class="a" style="left:519px;top:677px;width:194px;height:8px;background:#6c7073;border-radius:1px"></div>
<div class="a" style="left:613px;top:680px;width:5px;height:2px;border-left:1px solid #aaa;border-right:1px solid #aaa"></div>
<svg width="5" height="8" style="left:35px;top:677px"><path d="M4 0.5L0.5 3.8L4 7Z" fill="#8a8d90"/></svg>
<svg width="5" height="8" style="left:1240px;top:677px"><path d="M0.5 0.5L4 3.8L0.5 7Z" fill="#8a8d90"/></svg>
<div class="a" style="left:28px;top:688px;width:1232px;height:1px;background:#36393c"></div>
<!-- color bar -->
<svg width="13" height="13" style="left:4px;top:689px"><rect x="0" y="0" width="13" height="13" fill="#f4f4f4"/><g fill="#888"><rect x="0" y="0" width="2" height="2"/><rect x="11" y="0" width="2" height="2"/><rect x="0" y="11" width="2" height="2"/><rect x="11" y="11" width="2" height="2"/></g><circle cx="6.5" cy="6.5" r="5" fill="#ff8000"/></svg>
<svg width="11" height="11" style="left:26px;top:689px"><defs><linearGradient id="cw1" x1="0" x2="1"><stop offset="0" stop-color="#ff00ff"/><stop offset="0.5" stop-color="#ffff00"/><stop offset="1" stop-color="#00ff00"/></linearGradient><linearGradient id="cw2" x1="0" x2="0" y1="0" y2="1"><stop offset="0" stop-color="#fff" stop-opacity="0"/><stop offset="0.5" stop-color="#fff" stop-opacity="0.7"/><stop offset="1" stop-color="#0000ff" stop-opacity="0.9"/></linearGradient></defs><rect x="0.5" y="0.5" width="10" height="10" fill="url(#cw1)" stroke="#111"/><rect x="1" y="1" width="9" height="9" fill="url(#cw2)"/></svg>
<svg width="12" height="12" style="left:39px;top:689px"><path d="M1.5 10.5L8 4" stroke="#e8e8e8" stroke-width="2"/><path d="M7 3L9.5 0.5L11.5 2.5L9 5Z" fill="#6a9ad8"/></svg>
<svg width="11" height="11" style="left:52px;top:689px"><rect x="0.5" y="0.5" width="10" height="10" fill="#f4f4f4" stroke="#222"/><path d="M2 2L9 9M9 2L2 9" stroke="#222" stroke-width="1.5"/><circle cx="8" cy="3" r="1.3" fill="#000"/></svg>
<div class="sw" style="left:66.0px;top:691.5px;background:#f08888"></div><div class="sw" style="left:77.3px;top:691.5px;background:#ff0000"></div><div class="sw" style="left:88.6px;top:691.5px;background:#d80000"></div><div class="sw" style="left:99.9px;top:691.5px;background:#a00000"></div><div class="sw" style="left:111.2px;top:691.5px;background:#5a0000"></div><div class="sw" style="left:122.4px;top:691.5px;background:#f8b888"></div><div class="sw" style="left:133.7px;top:691.5px;background:#ff8000"></div><div class="sw" style="left:145.0px;top:691.5px;background:#d86c00"></div><div class="sw" style="left:156.3px;top:691.5px;background:#a05400"></div><div class="sw" style="left:167.6px;top:691.5px;background:#5a2e00"></div><div class="sw" style="left:178.9px;top:691.5px;background:#ffff90"></div><div class="sw" style="left:190.2px;top:691.5px;background:#ffff00"></div><div class="sw" style="left:201.5px;top:691.5px;background:#d0d000"></div><div class="sw" style="left:212.8px;top:691.5px;background:#9a9a00"></div><div class="sw" style="left:224.1px;top:691.5px;background:#555500"></div><div class="sw" style="left:235.3px;top:691.5px;background:#90ff90"></div><div class="sw" style="left:246.6px;top:691.5px;background:#00ff00"></div><div class="sw" style="left:257.9px;top:691.5px;background:#00d000"></div><div class="sw" style="left:269.2px;top:691.5px;background:#009a00"></div><div class="sw" style="left:280.5px;top:691.5px;background:#005500"></div><div class="sw" style="left:291.8px;top:691.5px;background:#90ffff"></div><div class="sw" style="left:303.1px;top:691.5px;background:#00ffff"></div><div class="sw" style="left:314.4px;top:691.5px;background:#00d0d0"></div><div class="sw" style="left:325.7px;top:691.5px;background:#009a9a"></div><div class="sw" style="left:337.0px;top:691.5px;background:#005555"></div><div class="sw" style="left:348.2px;top:691.5px;background:#9090ff"></div><div class="sw" style="left:359.5px;top:691.5px;background:#0000ff"></div><div class="sw" style="left:370.8px;top:691.5px;background:#0000d0"></div><div class="sw" style="left:382.1px;top:691.5px;background:#00009a"></div><div class="sw" style="left:393.4px;top:691.5px;background:#000055"></div><div class="sw" style="left:404.7px;top:691.5px;background:#ff90ff"></div><div class="sw" style="left:416.0px;top:691.5px;background:#ff00ff"></div><div class="sw" style="left:427.3px;top:691.5px;background:#d000d0"></div><div class="sw" style="left:438.6px;top:691.5px;background:#9a009a"></div><div class="sw" style="left:449.9px;top:691.5px;background:#550055"></div><div class="sw" style="left:461.1px;top:691.5px;background:#ffffff"></div><div class="sw" style="left:472.4px;top:691.5px;background:#dadada"></div><div class="sw" style="left:483.7px;top:691.5px;background:#c0c0c0"></div><div class="sw" style="left:495.0px;top:691.5px;background:#a4a4a4"></div><div class="sw" style="left:506.3px;top:691.5px;background:#8a8a8a"></div><div class="sw" style="left:517.6px;top:691.5px;background:#5e6062"></div><div class="sw" style="left:528.9px;top:691.5px;background:#4b5052"></div><div class="sw" style="left:540.2px;top:691.5px;background:#3a3c3e"></div><div class="sw" style="left:551.5px;top:691.5px;background:#262626"></div><div class="sw" style="left:562.8px;top:691.5px;background:#050505"></div><div class="sw" style="left:574.0px;top:691.5px;background:#ffffff"></div>
<div class="a" style="left:134px;top:692px;width:3px;height:3px;border-radius:50%;background:#111"></div>
<!-- status icons -->
<svg width="10" height="13" style="left:1162px;top:704px"><rect x="0" y="0" width="10" height="13" fill="#3e4245"/><rect x="1" y="1" width="3" height="3" fill="#6aa0e0"/><path d="M4 3V11L6 9L7.5 12L8.5 11.5L7 8.5H9.5Z" fill="#f0f0f0"/></svg>
<svg width="10" height="13" style="left:1174px;top:704px"><path d="M1 1.5H6Q9 1.5 9 4.5Q9 7.5 6 7.5H3M1 4H5M3 7.5V9M0.5 11.5H9.5" stroke="#f0f0f0" stroke-width="1.1" fill="none"/></svg>
<svg width="12" height="12" style="left:1268px;top:707px"><path d="M11 3L3 11M11 7L7 11" stroke="#6a6e71" stroke-width="1"/></svg>

<!-- status -->
<div class="a" style="left:3.5px;top:706px;font-size:8.3px;color:#dcdcdc;white-space:nowrap"><b style="color:#f0f0f0">1 extrusion:</b> Changes the size of the bevel</div>
<div class="a" style="left:1185px;top:704px;width:79px;height:13px;background:#45494c;border:1px solid #5c6063"></div>
<div class="a" style="left:1188px;top:705.5px;font-size:8px;color:#e8e8e8;white-space:nowrap">10.543, 15.785cm</div>
</body></html>
